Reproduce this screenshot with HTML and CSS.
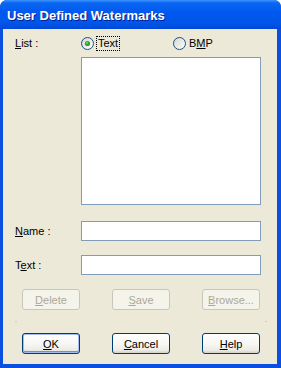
FILE: index.html
```html
<!DOCTYPE html>
<html lang="en">
<head>
  <meta charset="UTF-8">
  <title>User Defined Watermarks</title>
  <link rel="stylesheet" href="styles.css">
</head>
<body>
  <div class="window">
    <div class="titlebar">
      <span class="title">User Defined Watermarks</span>
    </div>
    <div class="client">
      <div class="head">
        <span class="label"><u>L</u>ist :</span>
        <label class="radio">
          <svg width="13" height="13" viewBox="0 0 13 13">
            <defs>
              <linearGradient id="rg1" x1="0" y1="0" x2="1" y2="1">
                <stop offset="0" stop-color="#d6d4ca"/>
                <stop offset="1" stop-color="#ffffff"/>
              </linearGradient>
            </defs>
            <circle cx="6.5" cy="6.5" r="6" fill="url(#rg1)" stroke="#1c5180"/>
            <circle cx="6.5" cy="6.5" r="2.6" fill="#2ca32c"/>
            <circle cx="6" cy="6" r="1" fill="#7fd27f"/>
          </svg>
          <span class="focus">Text</span>
        </label>
        <label class="radio bmp">
          <svg width="13" height="13" viewBox="0 0 13 13">
            <defs>
              <linearGradient id="rg2" x1="0" y1="0" x2="1" y2="1">
                <stop offset="0" stop-color="#d6d4ca"/>
                <stop offset="1" stop-color="#ffffff"/>
              </linearGradient>
            </defs>
            <circle cx="6.5" cy="6.5" r="6" fill="url(#rg2)" stroke="#1c5180"/>
          </svg>
          <span>B<u>M</u>P</span>
        </label>
      </div>

      <div class="listbox"></div>

      <div class="field first">
        <span class="label"><u>N</u>ame :</span>
        <div class="textbox"></div>
      </div>
      <div class="field">
        <span class="label">T<u>e</u>xt :</span>
        <div class="textbox"></div>
      </div>

      <div class="actions">
        <button class="btn" disabled><u>D</u>elete</button>
        <button class="btn" disabled><u>S</u>ave</button>
        <button class="btn" disabled><u>B</u>rowse...</button>
      </div>

      <div class="separator"></div>

      <div class="actions bottom">
        <button class="btn default"><u>O</u>K</button>
        <button class="btn"><u>C</u>ancel</button>
        <button class="btn"><u>H</u>elp</button>
      </div>
    </div>
  </div>
</body>
</html>
```

FILE: styles.css
```css
body {
  margin: 0;
  padding: 0;
  background: #ffffff;
}
.window {
  width: 281px;
  height: 368px;
  display: flex;
  flex-direction: column;
  background: #0a4fe0;
  border-radius: 7px 7px 0 0;
  overflow: hidden;
  box-sizing: border-box;
}
.titlebar {
  height: 29px;
  flex-shrink: 0;
  display: flex;
  align-items: center;
  padding-left: 7px;
  background: linear-gradient(to bottom, #3d95ff 0%, #0a66f2 10%, #0058ee 45%, #0056ea 80%, #0047d6 100%);
}
.title {
  color: #ffffff;
  font: bold 13px "Liberation Sans", Arial, sans-serif;
  text-shadow: 1px 1px 0 #0a1e8a;
  margin-top: 1px;
}
.client {
  flex: 1;
  margin: 0 4px 4px 3px;
  background: #ece9d8;
  padding: 7px 0 0 12px;
  font: 11px "Liberation Sans", Tahoma, sans-serif;
  color: #000000;
}
.label {
  width: 66px;
  flex-shrink: 0;
}
.head {
  display: flex;
  align-items: center;
  height: 14px;
}
.radio {
  display: flex;
  align-items: center;
  gap: 3px;
  width: 92px;
}
.radio svg {
  flex-shrink: 0;
}
.focus {
  outline: 1px dotted #000000;
  outline-offset: 0;
  padding: 0 1px;
  line-height: 13px;
}
.listbox {
  margin: 7px 0 0 66px;
  width: 180px;
  height: 148px;
  box-sizing: border-box;
  border: 1px solid #7f9db9;
  background: #ffffff;
}
.field {
  display: flex;
  align-items: center;
  margin-top: 14px;
}
.field.first {
  margin-top: 16px;
}
.textbox {
  width: 180px;
  height: 20px;
  box-sizing: border-box;
  border: 1px solid #7f9db9;
  background: #ffffff;
}
.actions {
  display: flex;
  gap: 32px;
  margin: 14px 0 0 7px;
}
.actions.bottom {
  margin-top: 11px;
}
.separator {
  height: 1px;
  margin: 11px 10px 0 0;
  background: linear-gradient(to right, #d2cfc0 0, #d2cfc0 2px, transparent 2px, transparent calc(100% - 2px), #d2cfc0 calc(100% - 2px));
}
.btn {
  width: 58px;
  height: 21px;
  box-sizing: border-box;
  padding: 0;
  font: 11px "Liberation Sans", Tahoma, sans-serif;
  color: #000000;
  border: 1px solid #003c74;
  border-radius: 3px;
  background: linear-gradient(to bottom, #ffffff 0%, #f7f7f4 50%, #ecebe6 85%, #d6d0c5 100%);
}
.btn:disabled {
  color: #aca899;
  border-color: #c9c7ba;
  background: #f5f4ea;
}
.btn.default {
  box-shadow: inset 0 0 0 1px #a3bdf2, inset 0 -1px 0 1px #6d8fe0;
}
```
